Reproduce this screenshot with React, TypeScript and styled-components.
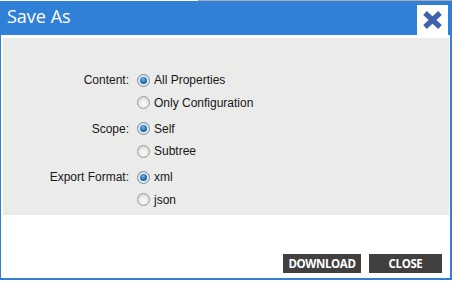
import React, { useState } from "react";
import styled, { createGlobalStyle } from "styled-components";

const GlobalStyle = createGlobalStyle`
  html, body {
    margin: 0;
    padding: 0;
    background: #ffffff;
    overflow: hidden;
  }
  body {
    font-family: "Liberation Sans", Arial, sans-serif;
  }
`;

const Page = styled.div`
  width: 452px;
  height: 282px;
  overflow: hidden;
  position: relative;
`;

// strip of the page behind the dialog that shows at the very top
const TopPeek = styled.div`
  display: flex;
  height: 1px;
`;

const PeekPart = styled.div<{ $grey?: boolean }>`
  width: ${(p) => (p.$grey ? "auto" : "198px")};
  flex: ${(p) => (p.$grey ? 1 : "none")};
  background: ${(p) => (p.$grey ? "#a9abad" : "#ffffff")};
`;

const Dialog = styled.div`
  box-sizing: border-box;
  width: 452px;
  height: 279px;
  border: 2px solid #2f80d6;
  border-top-width: 1px;
  border-left-width: 1px;
  display: flex;
  flex-direction: column;
  background: #ffffff;
`;

const Header = styled.div`
  height: 33px;
  background: #2f80d6;
  display: flex;
  align-items: flex-end;
  justify-content: space-between;
  padding: 0 2px 0 6px;
`;

const Title = styled.h1`
  margin: 0 0 7px 0;
  font-family: "Open Sans", sans-serif;
  font-weight: 400;
  font-size: 18px;
  line-height: 24px;
  color: #ffffff;
`;

const CloseBox = styled.button`
  width: 31px;
  height: 30px;
  margin: 0;
  padding: 0;
  border: none;
  background: #ffffff;
  display: flex;
  align-items: center;
  justify-content: center;
  cursor: pointer;
`;

const Body = styled.div`
  margin: 3px 1px 0 2px;
  height: 177px;
  box-sizing: border-box;
  background: #ebebe9;
  padding: 31px 0 0 0;
`;

const Form = styled.div`
  display: grid;
  grid-template-columns: 126px auto;
  column-gap: 8px;
  row-gap: 4px;
`;

const Label = styled.div`
  text-align: right;
  font-size: 12px;
  line-height: 22px;
  color: #17171d;
`;

const Options = styled.div`
  display: flex;
  flex-direction: column;
  gap: 0.5px;
`;

const Option = styled.label`
  display: flex;
  align-items: center;
  height: 22px;
  font-size: 12px;
  color: #17171d;
  cursor: pointer;
`;

const Radio = styled.span<{ $on: boolean }>`
  box-sizing: border-box;
  width: 13px;
  height: 13px;
  border-radius: 50%;
  border: 1px solid ${(p) => (p.$on ? "#6f8fb0" : "#9c9c9c")};
  background: radial-gradient(circle at 50% 60%, #ffffff 0%, #e6e6e6 55%, #c9c9c9 100%);
  margin-right: 4px;
  display: flex;
  align-items: center;
  justify-content: center;
  &::after {
    content: "";
    display: ${(p) => (p.$on ? "block" : "none")};
    width: 7px;
    height: 7px;
    border-radius: 50%;
    background: radial-gradient(circle at 45% 35%, #63b6ea 0%, #1e6aa8 60%, #0f3f72 100%);
  }
`;

const Footer = styled.div`
  flex: 1;
  display: flex;
  justify-content: flex-end;
  align-items: flex-end;
  gap: 8px;
  padding: 0 8px 5px 0;
`;

const ActionButton = styled.button<{ $w: number }>`
  width: ${(p) => p.$w}px;
  height: 19px;
  border: none;
  padding: 0;
  background: #423f3f;
  color: #ffffff;
  font-family: "Open Sans", sans-serif;
  font-weight: 700;
  font-size: 11.5px;
  letter-spacing: -0.4px;
  cursor: pointer;
`;

const BehindRow = styled.div`
  display: flex;
  align-items: flex-start;
  gap: 12px;
  margin: 1px 0 0 202px;
  font-size: 12px;
  color: #1c2a55;
`;

const BehindIcon = styled.span`
  width: 6px;
  height: 8px;
  background: #c8c8c8;
  margin-top: 1px;
`;

type Group = { label: string; options: string[] };

const groups: Group[] = [
  { label: "Content:", options: ["All Properties", "Only Configuration"] },
  { label: "Scope:", options: ["Self", "Subtree"] },
  { label: "Export Format:", options: ["xml", "json"] },
];

function CloseIcon() {
  return (
    <svg width="21" height="20" viewBox="0 0 21 20">
      <path
        d="M3 3 L18 17 M18 3 L3 17"
        stroke="#4061ad"
        strokeWidth="5.2"
        strokeLinecap="butt"
      />
    </svg>
  );
}

export default function App() {
  const [picked, setPicked] = useState<Record<string, string>>({
    "Content:": "All Properties",
    "Scope:": "Self",
    "Export Format:": "xml",
  });

  return (
    <Page>
      <GlobalStyle />
      <TopPeek>
        <PeekPart />
        <PeekPart $grey />
      </TopPeek>
      <Dialog>
        <Header>
          <Title>Save As</Title>
          <CloseBox aria-label="close">
            <CloseIcon />
          </CloseBox>
        </Header>
        <Body>
          <Form>
            {groups.map((g) => (
              <React.Fragment key={g.label}>
                <Label>{g.label}</Label>
                <Options>
                  {g.options.map((o) => (
                    <Option
                      key={o}
                      onClick={() => setPicked({ ...picked, [g.label]: o })}
                    >
                      <Radio $on={picked[g.label] === o} />
                      {o}
                    </Option>
                  ))}
                </Options>
              </React.Fragment>
            ))}
          </Form>
        </Body>
        <Footer>
          <ActionButton $w={78}>DOWNLOAD</ActionButton>
          <ActionButton $w={73}>CLOSE</ActionButton>
        </Footer>
      </Dialog>
      <BehindRow>
        <BehindIcon />
        <span>Download Config</span>
      </BehindRow>
    </Page>
  );
}
